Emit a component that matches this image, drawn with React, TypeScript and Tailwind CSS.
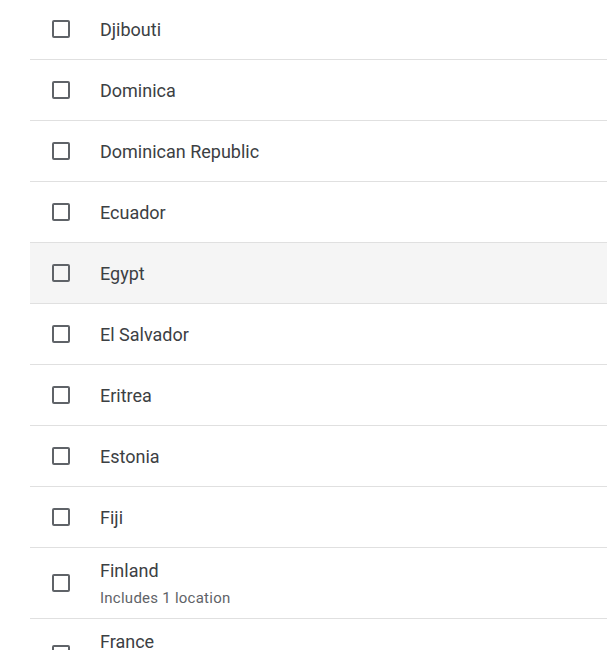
const countries: { name: string; sub?: string; hover?: boolean }[] = [
  { name: "Djibouti" },
  { name: "Dominica" },
  { name: "Dominican Republic" },
  { name: "Ecuador" },
  { name: "Egypt", hover: true },
  { name: "El Salvador" },
  { name: "Eritrea" },
  { name: "Estonia" },
  { name: "Fiji" },
  { name: "Finland", sub: "Includes 1 location" },
  { name: "France", sub: "Includes 1 location" },
];

const Row = ({ name, sub, hover }: { name: string; sub?: string; hover?: boolean }) => (
  <li
    className={`flex items-center border-b border-[#e0e0e0] ${sub ? "h-[71px]" : "h-[61px]"} ${
      hover ? "bg-[#f5f5f5]" : "bg-white"
    }`}>
    <div className="w-[70px] flex justify-start pl-[22px] shrink-0">
      <span className="block w-[18px] h-[18px] border-2 border-[#5f6368] rounded-[2px]" />
    </div>
    <div className={`flex flex-col ${sub ? "" : "pt-[2px]"}`}>
      <span className="text-[18px] leading-[24px] text-[#3c4043]">{name}</span>
      {sub && (
        <span className="text-[15px] leading-[20px] mt-[5px] tracking-[0.25px] text-[#5f6368]">{sub}</span>
      )}
    </div>
  </li>
);

export default function App() {
  return (
    <div className="w-[607px] h-[650px] overflow-hidden bg-white font-['Roboto',sans-serif]">
      <ul className="ml-[30px] -mt-[2px] border-t border-[#e0e0e0]">
        {countries.map((c) => (
          <Row key={c.name} {...c} />
        ))}
      </ul>
    </div>
  );
}
